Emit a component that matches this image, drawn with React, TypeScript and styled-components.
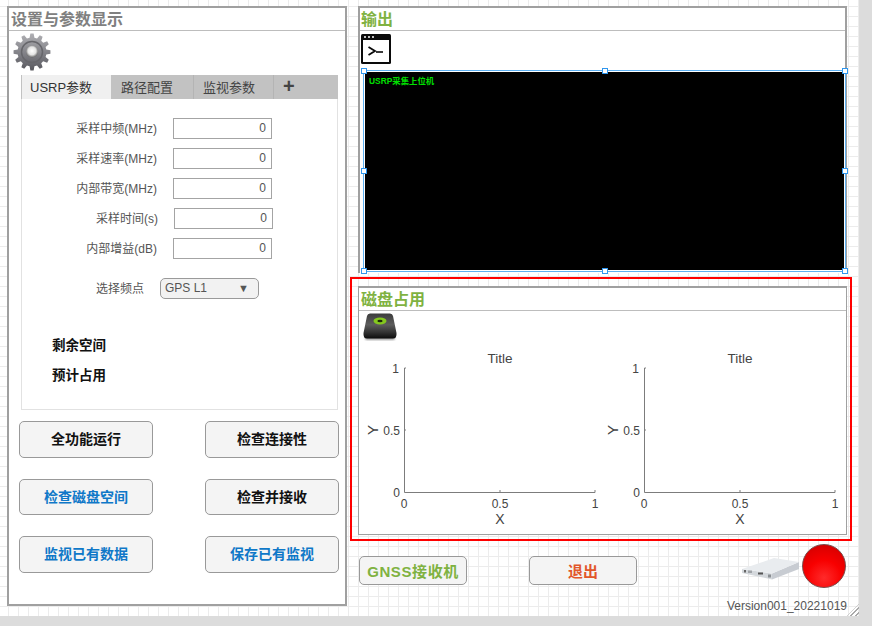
import styled, { createGlobalStyle } from 'styled-components'

const GlobalStyle = createGlobalStyle`
  * { box-sizing: border-box; }
  html, body { margin: 0; height: 100%; overflow: hidden; background: #dcdcdc; }
  body { font-family: "Liberation Sans", "Noto Sans CJK SC", sans-serif; }
`

const params = [
  { label: '采样中频(MHz)' },
  { label: '采样速率(MHz)' },
  { label: '内部带宽(MHz)' },
  { label: '采样时间(s)', nudge: 1 },
  { label: '内部增益(dB)' },
]

const actions = [
  { text: '全功能运行', color: '#111' },
  { text: '检查连接性', color: '#111' },
  { text: '检查磁盘空间', color: '#0f78c8' },
  { text: '检查并接收', color: '#111' },
  { text: '监视已有数据', color: '#0f78c8' },
  { text: '保存已有监视', color: '#0f78c8' },
]

const handles = [
  [0, 0], [50, 0], [100, 0],
  [0, 50], [100, 50],
  [0, 100], [50, 100], [100, 100],
]

// 齿轮外形
const gearPath = () => {
  const teeth = 12
  const pts: string[] = []
  for (let i = 0; i < teeth; i++) {
    const a = (i / teeth) * Math.PI * 2
    const step = (Math.PI * 2) / teeth
    const at = (r: number, t: number) =>
      `${(19 + r * Math.cos(t)).toFixed(2)},${(19 + r * Math.sin(t)).toFixed(2)}`
    pts.push(at(14.5, a - step * 0.32), at(18.5, a - step * 0.17), at(18.5, a + step * 0.17), at(14.5, a + step * 0.32))
  }
  return pts.join(' ')
}

const GearIcon = () => (
  <svg width="38" height="38" viewBox="0 0 38 38">
    <defs>
      <linearGradient id="gearFill" x1="0" y1="0" x2="0" y2="1">
        <stop offset="0" stopColor="#b0b0b4" />
        <stop offset="0.55" stopColor="#808086" />
        <stop offset="1" stopColor="#58585e" />
      </linearGradient>
      <radialGradient id="gearHole" cx="0.5" cy="0.45" r="0.55">
        <stop offset="0" stopColor="#ffffff" />
        <stop offset="0.6" stopColor="#e4e4e4" />
        <stop offset="1" stopColor="#666" />
      </radialGradient>
    </defs>
    <polygon points={gearPath()} fill="url(#gearFill)" />
    <circle cx="19" cy="19" r="10.5" fill="none" stroke="#66666b" strokeWidth="1.5" />
    <circle cx="19" cy="18.5" r="6" fill="url(#gearHole)" />
  </svg>
)

const TerminalIcon = () => (
  <svg width="30" height="30" viewBox="0 0 30 30">
    <rect x="0" y="0" width="30" height="30" rx="1.5" fill="#0a0a0a" />
    <rect x="2" y="6" width="26" height="22" fill="#fff" />
    <circle cx="4" cy="3" r="1" fill="#fff" />
    <circle cx="8" cy="3" r="1" fill="#fff" />
    <circle cx="12" cy="3" r="1" fill="#fff" />
    <path d="M7.5 13 L14 17 L7.5 21" fill="none" stroke="#0a0a0a" strokeWidth="1.8" />
    <path d="M15 18 H22" fill="none" stroke="#0a0a0a" strokeWidth="1.6" />
  </svg>
)

const DiskIcon = () => (
  <svg width="34" height="28" viewBox="0 0 34 28">
    <defs>
      <linearGradient id="diskBody" x1="0" y1="0" x2="0" y2="1">
        <stop offset="0" stopColor="#3c3c3c" />
        <stop offset="0.45" stopColor="#5c5c5c" />
        <stop offset="0.75" stopColor="#333" />
        <stop offset="1" stopColor="#0c0c0c" />
      </linearGradient>
      <filter id="diskShadow" x="-10%" y="-10%" width="120%" height="130%">
        <feGaussianBlur stdDeviation="0.8" />
      </filter>
    </defs>
    <rect x="2" y="23" width="30" height="4" rx="2" fill="#999" filter="url(#diskShadow)" />
    <path d="M7 0.5 H27 Q29.5 0.5 30 3 L33.5 20 Q34 25.5 30 25.5 H4 Q0 25.5 0.5 20 L4 3 Q4.5 0.5 7 0.5 Z" fill="url(#diskBody)" />
    <ellipse cx="17" cy="8" rx="6.5" ry="3.4" fill="#84c81e" />
    <ellipse cx="17" cy="8" rx="2.6" ry="1.3" fill="#1d2a08" />
  </svg>
)

const DeviceIcon = () => (
  <svg width="57" height="22" viewBox="0 0 57 22">
    <path d="M0 11 L30 15.5 L30 21.5 L0 15 Z" fill="#d4d8dc" />
    <path d="M30 15.5 L57 4 L57 11 L30 21.5 Z" fill="#c8ccd2" />
    <path d="M0 11 L32 0 L57 4 L30 15.5 Z" fill="#e9ecef" />
    <rect x="2" y="12" width="2" height="2.5" fill="#666" />
    <rect x="6" y="12.5" width="4" height="2.5" fill="#a0a4a8" />
    <rect x="16" y="14.5" width="5" height="2" fill="#555" />
    <rect x="26" y="16.5" width="3" height="3" fill="#8a8e92" />
  </svg>
)

const Chart = () => (
  <ChartFrame width="240" height="182" viewBox="0 0 240 182">
    <text x="140" y="15" textAnchor="middle" fontSize="13.5">Title</text>
    <path d="M46 20 H44.5 V144.5 H235 V142" fill="none" stroke="#7c7c7c" strokeWidth="1" />
    <path d="M140 144 V142 M44 82 H46" fill="none" stroke="#7c7c7c" strokeWidth="1" />
    <text x="39" y="24.5" textAnchor="end" fontSize="12">1</text>
    <text x="40" y="86.5" textAnchor="end" fontSize="12">0.5</text>
    <text x="40" y="148.5" textAnchor="end" fontSize="12">0</text>
    <text x="44" y="160" textAnchor="middle" fontSize="12">0</text>
    <text x="140" y="160" textAnchor="middle" fontSize="12">0.5</text>
    <text x="235" y="160" textAnchor="middle" fontSize="12">1</text>
    <text x="140" y="176" textAnchor="middle" fontSize="14">X</text>
    <text x="13" y="82" textAnchor="middle" fontSize="15" transform="rotate(-90 13 82) translate(0 5)">Y</text>
  </ChartFrame>
)

function App() {
  return (
    <Page>
      <GlobalStyle />
      <Canvas>
        <SettingsPanel>
          <PanelTitle $color="#808080">设置与参数显示</PanelTitle>
          <GearRow><GearIcon /></GearRow>
          <TabGroup>
            <TabStrip>
              <Tab $active $width={90}>USRP参数</Tab>
              <Tab $width={82}>路径配置</Tab>
              <Tab $width={80}>监视参数</Tab>
              <AddTab>+</AddTab>
            </TabStrip>
            <TabBody>
              <ParamList>
                {params.map(p => (
                  <ParamRow key={p.label} $nudge={p.nudge ?? 0}>
                    <ParamLabel>{p.label}</ParamLabel>
                    <NumberField>0</NumberField>
                  </ParamRow>
                ))}
              </ParamList>
              <SelectRow>
                <SelectLabel>选择频点</SelectLabel>
                <Select>
                  GPS L1
                  <Caret>▼</Caret>
                </Select>
              </SelectRow>
              <InfoLine $top={37}>剩余空间</InfoLine>
              <InfoLine $top={10}>预计占用</InfoLine>
            </TabBody>
          </TabGroup>
          <ActionGrid>
            {actions.map(a => (
              <ActionButton key={a.text} $color={a.color}>{a.text}</ActionButton>
            ))}
          </ActionGrid>
        </SettingsPanel>

        <RightColumn>
          <OutputPanel>
            <PanelTitle $color="#7fb241" $pad={1}>输出</PanelTitle>
            <IconRow><TerminalIcon /></IconRow>
            <ConsoleFrame>
              <Console>USRP采集上位机</Console>
              {handles.map(([x, y]) => (
                <Handle key={`${x}-${y}`} style={{ left: `${x}%`, top: `${y}%` }} />
              ))}
            </ConsoleFrame>
          </OutputPanel>

          <RedBox>
            <DiskPanel>
              <PanelTitle $color="#7fb241">磁盘占用</PanelTitle>
              <DiskIconRow><DiskIcon /></DiskIconRow>
              <ChartRow>
                <Chart />
                <Chart />
              </ChartRow>
            </DiskPanel>
          </RedBox>

          <BottomRow>
            <WideButton $color="#7fb241" $ls={0.6}>GNSS接收机</WideButton>
            <WideButton $color="#e2572b">退出</WideButton>
            <DeviceSlot><DeviceIcon /></DeviceSlot>
            <Lamp />
          </BottomRow>
          <Version>Version001_20221019</Version>
        </RightColumn>
        <Grip />
      </Canvas>
    </Page>
  )
}

const Page = styled.div`
  width: 872px;
  height: 626px;
  background: #dcdcdc;
`

const Canvas = styled.div`
  position: relative;
  width: 859px;
  height: 616px;
  display: flex;
  align-items: flex-start;
  padding: 6px 0 0 7px;
  background-color: #fff;
  background-image:
    linear-gradient(to right, #ececec 1px, transparent 1px),
    linear-gradient(to bottom, #ececec 1px, transparent 1px);
  background-size: 10px 10px;
  background-position: 8px 6px;
`

const SettingsPanel = styled.section`
  width: 340px;
  height: 600px;
  border: 2px solid #a0a0a0;
  background: #fff;
  display: flex;
  flex-direction: column;
`

const PanelTitle = styled.h2<{ $color: string; $pad?: number }>`
  margin: 0;
  height: 23px;
  padding: 0 0 0 ${p => p.$pad ?? 2}px;
  border-bottom: 1px solid #bdbdbd;
  color: ${p => p.$color};
  font-size: 16px;
  font-weight: 700;
  line-height: 23px;
  white-space: nowrap;
`

const GearRow = styled.div`
  height: 44px;
  padding: 2px 0 0 4px;
`

const TabGroup = styled.div`
  width: 317px;
  margin-left: 12px;
  display: flex;
  flex-direction: column;
`

const TabStrip = styled.div`
  height: 24px;
  display: flex;
  background: #c2c2c2;
`

const Tab = styled.div<{ $active?: boolean; $width: number }>`
  width: ${p => p.$width}px;
  padding-left: ${p => (p.$active ? 8 : 9)}px;
  margin-left: ${p => (p.$active ? 1 : 0)}px;
  background: ${p => (p.$active ? '#f0f0f0' : 'transparent')};
  border-right: 1px solid ${p => (p.$active ? '#c2c2c2' : '#b4b4b4')};
  color: ${p => (p.$active ? '#333' : '#444')};
  font-size: 13px;
  line-height: 25px;
  white-space: nowrap;
`

const AddTab = styled.div`
  padding-left: 9px;
  color: #444;
  font-size: 20px;
  font-weight: 700;
  line-height: 22px;
`

const TabBody = styled.div`
  height: 311px;
  padding-top: 19px;
  border: 1px solid #e2e2e2;
  border-top: 0;
  background: #fff;
`

const ParamList = styled.div`
  display: flex;
  flex-direction: column;
  gap: 9px;
`

const ParamRow = styled.div<{ $nudge: number }>`
  display: grid;
  grid-template-columns: 135px 99px;
  column-gap: 16px;
  align-items: center;
  height: 21px;
  padding-left: ${p => p.$nudge}px;
`

const ParamLabel = styled.span`
  padding-bottom: 2px;
  color: #555;
  font-size: 12px;
  text-align: right;
  white-space: nowrap;
`

const NumberField = styled.div`
  height: 21px;
  padding-right: 5px;
  border: 1.5px solid #a4a4a4;
  background: #fff;
  color: #555;
  font-size: 12px;
  line-height: 18px;
  text-align: right;
`

const SelectRow = styled.div`
  display: grid;
  grid-template-columns: 122px 99px;
  column-gap: 16px;
  align-items: center;
  margin-top: 19px;
`

const SelectLabel = styled.span`
  padding-bottom: 2px;
  color: #555;
  font-size: 12px;
  text-align: right;
`

const Select = styled.div`
  position: relative;
  height: 21px;
  padding-left: 4px;
  border: 1.5px solid #9a9a9a;
  border-radius: 5px;
  background: #f2f2f2;
  color: #555;
  font-size: 12px;
  line-height: 18px;
`

const Caret = styled.span`
  position: absolute;
  right: 9px;
  top: 0;
  color: #555;
  font-size: 11px;
`

const InfoLine = styled.div<{ $top: number }>`
  margin: ${p => p.$top}px 0 0 30px;
  color: #111;
  font-size: 13.5px;
  font-weight: 700;
  line-height: 20px;
`

const ActionGrid = styled.div`
  display: grid;
  grid-template-columns: 134px 134px;
  justify-content: space-between;
  row-gap: 21px;
  width: 320px;
  margin: 11px 0 0 10px;
`

const ActionButton = styled.button<{ $color: string }>`
  height: 36.5px;
  padding: 0 0 2px;
  border: 1.5px solid #999;
  border-radius: 5px;
  background: #f4f4f4;
  color: ${p => p.$color};
  font-family: inherit;
  font-size: 14px;
  font-weight: 700;
`

const RightColumn = styled.div`
  width: 502px;
  margin-left: 3px;
  display: flex;
  flex-direction: column;
`

const OutputPanel = styled.section`
  width: 489px;
  height: 267px;
  margin-left: 8px;
  border: 2px solid #a0a0a0;
  border-bottom: 0;
  background: #fff;
`

const IconRow = styled.div`
  height: 39px;
  padding: 3px 0 0 1px;
`

const ConsoleFrame = styled.div`
  position: relative;
  width: 483px;
  height: 202px;
  margin-left: 3px;
  padding: 1px;
  border: 1px solid #5db0f2;
`

const Console = styled.div`
  height: 100%;
  padding: 4px 4px;
  background: #000;
  color: #00e000;
  font-size: 8.4px;
  font-weight: 700;
  line-height: 10px;
`

const Handle = styled.span`
  position: absolute;
  width: 6px;
  height: 6px;
  margin: -3px 0 0 -3px;
  border: 1px solid #2f96ee;
  background: #fff;
`

const RedBox = styled.div`
  width: 502px;
  height: 264px;
  margin-top: 4px;
  padding: 7px 3px 4px 6px;
  border: 2px solid #ff0000;
`

const DiskPanel = styled.section`
  height: 100%;
  border: 2px solid #a0a0a0;
  border-width: 2px 1px 1px 1px;
  background: #fff;
`

const DiskIconRow = styled.div`
  height: 37px;
  padding: 2px 0 0 4px;
`

const ChartRow = styled.div`
  display: flex;
  padding-left: 1px;
`

const ChartFrame = styled.svg`
  display: block;
  font-family: "Liberation Sans", sans-serif;
  fill: #444;
`

const BottomRow = styled.div`
  display: flex;
  align-items: center;
  height: 44px;
  margin: 3px 0 0 9px;
`

const WideButton = styled.button<{ $color: string; $ls?: number }>`
  align-self: flex-end;
  width: 108px;
  height: 29px;
  margin: 0 62px 3px 0;
  padding: 0;
  border: 1.5px solid #999;
  border-radius: 5px;
  background: #f4f4f4;
  color: ${p => p.$color};
  font-family: inherit;
  font-size: 15px;
  font-weight: 700;
  letter-spacing: ${p => p.$ls ?? 0}px;
`

const DeviceSlot = styled.div`
  margin: 6px 3px 0 43px;
  line-height: 0;
`

const Lamp = styled.div`
  width: 44px;
  height: 44px;
  margin-right: 1px;
  border: 1.5px solid #7a4a4a;
  border-radius: 50%;
  background: radial-gradient(circle at 50% 78%, #ff2a2a 0%, #f80000 45%, #e00000 75%, #b80000 100%);
`

const Version = styled.div`
  width: 489px;
  margin: 11px 0 0 8px;
  color: #555;
  font-size: 12px;
  line-height: 14px;
  text-align: right;
`

const Grip = styled.div`
  position: absolute;
  right: 0;
  bottom: 0;
  width: 12px;
  height: 12px;
  background: repeating-linear-gradient(135deg, transparent 0 1.5px, #aaa 1.5px 3px);
  clip-path: polygon(100% 0, 100% 100%, 0 100%);
`

export default App
